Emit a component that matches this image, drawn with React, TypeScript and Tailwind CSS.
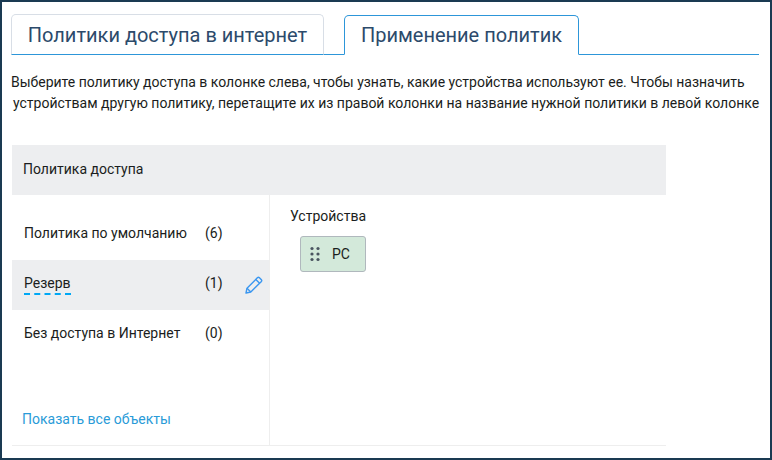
export default function App() {
  const text = "text-[#1a1d20]";
  return (
    <div className="w-[772px] h-[460px] bg-white border-2 border-[#1a3a52] overflow-hidden font-['Roboto',sans-serif] text-[14px]">
      <div className="ml-[9px] mr-[11px] mt-[12px] h-[41px] flex items-end border-b border-[#2d96d9] gap-[20px]">
        <div className="w-[313px] h-[41px] -mb-px bg-white border border-[#d8dee6] border-b-[#2d96d9] rounded-t-[5px] flex items-center justify-center text-[20px] text-[#2c4a6b]">Политики доступа в интернет</div>
        <div className="w-[235px] h-[40px] -mb-px bg-white border border-[#2d96d9] border-b-white rounded-t-[5px] flex items-center justify-center text-[20px] text-[#2c4a6b]">Применение политик</div>
      </div>
      <div className={`ml-[9px] mt-[17px] leading-[21px] whitespace-nowrap ${text}`}>
        <div className="tracking-[-0.015px]">Выберите политику доступа в колонке слева, чтобы узнать, какие устройства используют ее. Чтобы назначить</div>
        <div className="ml-[2px]">устройствам другую политику, перетащите их из правой колонки на название нужной политики в левой колонке</div>
      </div>
      <div className="ml-[10px] mt-[31px] w-[654px] border-b border-[#eeeeee]">
        <div className={`h-[50px] pb-[2px] bg-[#edeef0] flex items-center px-[11px] ${text}`}>Политика доступа</div>
        <div className="flex h-[250px]">
          <div className="w-[258px] border-r border-[#eeeeee] pt-[15px] flex flex-col">
            <div className="h-[50px] pb-[4px] flex items-center pl-[12px]">
              <span className={`w-[181px] ${text}`}>Политика по умолчанию</span>
              <span className={text}>(6)</span>
            </div>
            <div className="h-[50px] pb-[4px] flex items-center pl-[12px] bg-[#edeef0]">
              <span className={`w-[181px] ${text}`}>
                <span className="pb-[2px] border-b-2 border-dashed border-[#00a8f5]">Резерв</span>
              </span>
              <span className={text}>(1)</span>
              <svg className="ml-[22px] mt-[3px]" width="18" height="18" viewBox="0 0 18 18" fill="none" stroke="#3b97f0" strokeWidth="1.4" strokeLinejoin="round">
                <path d="M1 17 L2 12.2 L12.6 1.6 Q13.4 0.9 14.2 1.6 L16.4 3.8 Q17.1 4.6 16.4 5.4 L5.8 16 Z" />
                <path d="M2 12.2 L5.8 16 M10.8 3.4 L14.6 7.2" />
              </svg>
            </div>
            <div className="h-[50px] pb-[4px] flex items-center pl-[12px]">
              <span className={`w-[181px] ${text}`}>Без доступа в Интернет</span>
              <span className={text}>(0)</span>
            </div>
            <div className="mt-[49px] pl-[10px] text-[#2a9bd8]">Показать все объекты</div>
          </div>
          <div className="flex-1 pl-[20px] pt-[13px]">
            <div className={`leading-[16px] ${text}`}>Устройства</div>
            <div className="ml-[10px] mt-[12px] w-[66px] h-[36px] bg-[#d3e9da] border border-[#b0b8bd] rounded-[3px] flex items-center pl-[9px]">
              <svg width="10" height="16" viewBox="0 0 10 16" fill="#4a5560">
                <circle cx="2" cy="2.5" r="1.6" />
                <circle cx="8" cy="2.5" r="1.6" />
                <circle cx="2" cy="8" r="1.6" />
                <circle cx="8" cy="8" r="1.6" />
                <circle cx="2" cy="13.5" r="1.6" />
                <circle cx="8" cy="13.5" r="1.6" />
              </svg>
              <span className={`ml-[12px] ${text}`}>PC</span>
            </div>
          </div>
        </div>
      </div>
    </div>
  );
}
